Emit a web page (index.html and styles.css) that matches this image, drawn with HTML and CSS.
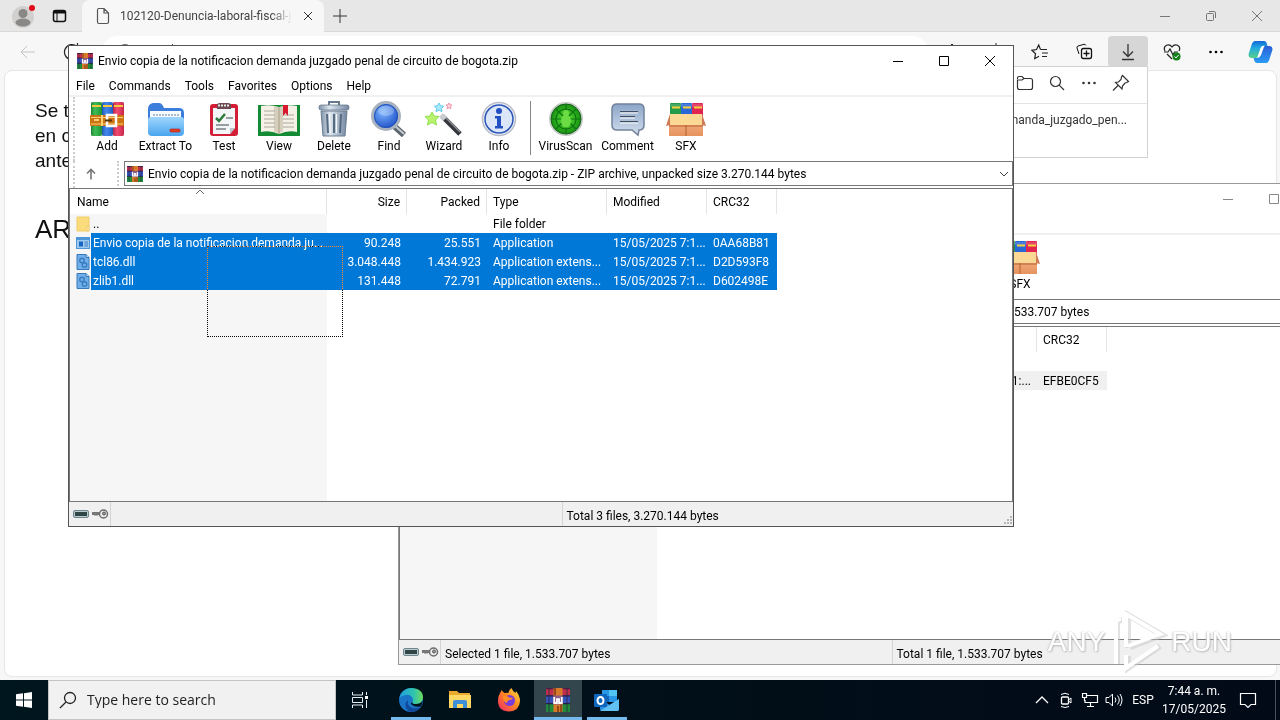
FILE: index.html
```
<!DOCTYPE html>
<html lang="en">
<head>
    <meta charset="UTF-8">
    <meta name="viewport" content="width=device-width, initial-scale=1.0">
    <title>Envio copia de la notificacion demanda juzgado penal de circuito de bogota.zip</title>
    <link rel="stylesheet" href="styles.css">
</head>
<body>
    <!-- shared icons -->
    <svg class="defs" width="0" height="0" aria-hidden="true">
        <defs>
            <linearGradient id="gBlue" x1="0" y1="0" x2="0" y2="1"><stop offset="0" stop-color="#9fd6ff"/><stop offset="1" stop-color="#4aa4ee"/></linearGradient>
            <linearGradient id="gSteel" x1="0" y1="0" x2="1" y2="0"><stop offset="0" stop-color="#7f93aa"/><stop offset=".35" stop-color="#dde7ef"/><stop offset="1" stop-color="#7285a0"/></linearGradient>
            <linearGradient id="gBook" x1="0" y1="0" x2="1" y2="0"><stop offset="0" stop-color="#0008"/><stop offset=".4" stop-color="#fff4"/><stop offset="1" stop-color="#0005"/></linearGradient>
            <linearGradient id="gBox" x1="0" y1="0" x2="0" y2="1"><stop offset="0" stop-color="#f4b183"/><stop offset="1" stop-color="#e6935f"/></linearGradient>
            <linearGradient id="gBubble" x1="0" y1="0" x2="0" y2="1"><stop offset="0" stop-color="#8ba6ca"/><stop offset="1" stop-color="#d3deed"/></linearGradient>
            <radialGradient id="gLens" cx=".4" cy=".35" r=".7"><stop offset="0" stop-color="#7fb6ff"/><stop offset="1" stop-color="#1548c4"/></radialGradient>
            <radialGradient id="gVirus"><stop offset="0" stop-color="#5fe838"/><stop offset="1" stop-color="#128a0e"/></radialGradient>
            <linearGradient id="gEdge" x1="0" y1="0" x2="1" y2="0"><stop offset="0" stop-color="#1f9fdc"/><stop offset=".6" stop-color="#2fc3b0"/><stop offset="1" stop-color="#6fdc5c"/></linearGradient>
            <linearGradient id="gFox" x1="1" y1="0" x2="0" y2="1"><stop offset="0" stop-color="#ffe34a"/><stop offset=".45" stop-color="#ff8a1e"/><stop offset="1" stop-color="#f0246c"/></linearGradient>
            <linearGradient id="gPilot" x1="0" y1="0" x2="0" y2="1"><stop offset="0" stop-color="#1268d8"/><stop offset=".4" stop-color="#20a9e0"/><stop offset="1" stop-color="#58cf8c"/></linearGradient>
            <linearGradient id="gPilot2" x1="0" y1="0" x2="0" y2="1"><stop offset="0" stop-color="#2b5fd8"/><stop offset="1" stop-color="#2a9cf4"/></linearGradient>
        </defs>
        <symbol id="winrar" viewBox="0 0 16 16">
            <rect width="16" height="5" fill="#c0304a"/><rect y="5" width="16" height="5" fill="#3553b8"/><rect y="10" width="16" height="6" fill="#1f8a3c"/>
            <path d="M0 5.200h16M0 10.400h16M0 .500h16" stroke="#2b1f45" stroke-width=".8"/>
            <path d="M2 0v16M14 0v16" stroke="#2a2040" stroke-opacity=".5"/>
            <rect x="5" width="6" height="16" fill="#d77a2c"/><path d="M6 0v5M10 11v5M8 12v4" stroke="#7d3a12"/>
            <path d="M5 5h6v6H5z" fill="#8e5a86"/><path d="M5.500 6v4h1.800V7.500h1.400V10h1.800V6" fill="none" stroke="#fff" stroke-width="1.200"/>
        </symbol>
        <symbol id="sfx" viewBox="0 0 42 36">
            <rect x="5" y="2" width="11" height="15" rx="1" fill="#249b48"/><rect x="16" y="2" width="11" height="15" rx="1" fill="#2967d8"/><rect x="27" y="2" width="11" height="15" rx="1" fill="#e02550"/>
            <path d="M5 3h11v3H5zM16 3h11v3H16zM27 3h11v3H27z" fill="#fff" opacity=".15"/><path d="M7 6.500h8M18 6.500h8M29 6.500h8" stroke="#f5d13c" stroke-width="2"/>
            <path d="M4 18h34v17H4z" fill="url(#gBox)"/><path d="M5 13h32l3 11H2z" fill="#fbd893"/><path d="M5 13 1 25l4-1zM37 13l4 12-4-1z" fill="#cf7a55"/>
            <path d="M4 24h34v2H4z" fill="#b85e32" opacity=".5"/><path d="M21 24v11" stroke="#b4602f"/>
        </symbol>
        <symbol id="disk" viewBox="0 0 16 8">
            <rect x=".5" y=".5" width="15" height="7" rx="1.500" fill="#b7cbd0" stroke="#71868b"/><rect x="2" y="2" width="12" height="4" fill="#304546"/>
        </symbol>
        <symbol id="key" viewBox="0 0 17 10">
            <path d="M0 3h9v3H6L5 7 4 6 3 7 2 6H0z" fill="#777"/><circle cx="11.500" cy="5" r="4" fill="#eee" stroke="#6b6b6b" stroke-width="1.500"/><circle cx="12" cy="4.500" r="1.500" fill="#999" stroke="#555"/>
        </symbol>
        <symbol id="dll" viewBox="0 0 13 16">
            <path d="M.5.5h9l3 3v12H.5z" fill="#6fb0ea" stroke="#3b78b8"/><path d="M9.500.5v3h3" fill="#b9dcf8" stroke="#3b78b8"/>
            <circle cx="5.500" cy="6.500" r="2.300" fill="none" stroke="#3b7cc0" stroke-width="1.400"/><circle cx="8" cy="11" r="2.300" fill="none" stroke="#3b7cc0" stroke-width="1.400"/>
        </symbol>
        <symbol id="search" viewBox="0 0 16 16"><circle cx="6.500" cy="6.500" r="5" fill="none" stroke="currentColor" stroke-width="1.200"/><path d="m10.200 10.200 4.800 4.800" stroke="currentColor" stroke-width="1.200"/></symbol>
        <symbol id="dots" viewBox="0 0 16 16"><g fill="currentColor"><circle cx="2.500" cy="8" r="1.300"/><circle cx="8" cy="8" r="1.300"/><circle cx="13.500" cy="8" r="1.300"/></g></symbol>
        <symbol id="min" viewBox="0 0 12 12"><path d="M1 6.500h10" stroke="currentColor"/></symbol>
        <symbol id="max" viewBox="0 0 12 12"><path d="M1.500 1.500h9v9h-9z" fill="none" stroke="currentColor"/></symbol>
        <symbol id="close" viewBox="0 0 12 12"><path d="m1 1 10 10M11 1 1 11" stroke="currentColor"/></symbol>
    </svg>

    <div class="desktop">
        <div class="browser">
            <div class="tab-strip">
                <button class="profile" aria-label="Profile">
                    <svg width="24" height="24" viewBox="0 0 24 24"><circle cx="11" cy="13" r="11" fill="#d2d0ce"/><circle cx="11" cy="9.500" r="4.500" fill="#8a8886"/><ellipse cx="11" cy="18.500" rx="7.500" ry="4" fill="#8a8886"/><circle cx="20" cy="4" r="3" fill="#e00b1c"/></svg>
                </button>
                <button class="tab-actions" aria-label="Tab actions">
                    <svg width="16" height="16" viewBox="0 0 16 16"><rect x="1.500" y="2.500" width="12" height="11" rx="2" fill="none" stroke="#111" stroke-width="1.500"/><path d="M1.500 4h12" stroke="#111" stroke-width="3"/><path d="M5 4v9.500" stroke="#111"/></svg>
                </button>
                <div class="tab">
                    <svg width="14" height="18" viewBox="0 0 14 18"><path d="M1.500 3v12q0 1.500 1.500 1.500h8q1.500 0 1.500-1.500V6L8 1.500H3Q1.500 1.500 1.500 3zM8 1.500V6h4.500" fill="none" stroke="#555" stroke-width="1.200"/></svg>
                    <span class="tab-title">102120-Denuncia-laboral-fiscal-j</span>
                    <button aria-label="Close tab"><svg width="12" height="12" viewBox="0 0 12 12"><path d="m2 2 8 8M10 2l-8 8" stroke="#333"/></svg></button>
                </div>
                <button class="new-tab" aria-label="New tab"><svg width="14" height="14" viewBox="0 0 14 14"><path d="M7 0v14M0 7h14" stroke="#333"/></svg></button>
                <div class="controls">
                    <button aria-label="Minimize"><svg width="12" height="12"><use href="#min"/></svg></button>
                    <button aria-label="Restore"><svg width="12" height="12" viewBox="0 0 12 12"><rect x="1.500" y="3.500" width="7" height="7" rx="1" fill="none" stroke="currentColor"/><path d="M4 1.500h5q1.500 0 1.500 1.500v5" fill="none" stroke="currentColor"/></svg></button>
                    <button aria-label="Close"><svg width="12" height="12"><use href="#close"/></svg></button>
                </div>
            </div>
            <div class="browser-bar">
                <button aria-label="Back"><svg width="16" height="16" viewBox="0 0 16 16"><path d="M15 8H1M7 2 1 8l6 6" fill="none" stroke="#c4c4c4"/></svg></button>
                <button aria-label="Refresh"><svg width="18" height="18" viewBox="0 0 18 18"><path d="M14 3.500A7.500 7.500 0 1 0 16.500 9M14.500 0v4h-4" fill="none" stroke="#222" stroke-width="1.200"/></svg></button>
                <div class="address-pill">
                    <svg width="18" height="18" viewBox="0 0 18 18"><circle cx="9" cy="9" r="7.500" fill="none" stroke="#666"/></svg>
                    <span class="pill-line"></span>
                </div>
                <button class="tool"><svg width="18" height="18" viewBox="0 0 18 18"><path d="M2 8 9 1l7 7v9H2z" fill="none" stroke="#222"/></svg></button>
                <button class="tool"><svg width="18" height="18" viewBox="0 0 18 18"><path d="M9 0v17M3 3h12v13H3z" fill="none" stroke="#222"/></svg></button>
                <button class="tool" aria-label="Favorites"><svg width="18" height="18" viewBox="0 0 18 18"><path d="M9.500 6.500 7.700 2 5.500 6.500 1 7.300l3.500 3.400-.8 5 4.300-2.400M9.500 6.500H16M11 10h6M11 13.500h5" fill="none" stroke="#222" stroke-width="1.200"/></svg></button>
                <button class="tool" aria-label="Collections"><svg width="18" height="18" viewBox="0 0 18 18"><rect x="6.500" y="5.500" width="10" height="10" rx="2" fill="none" stroke="#111" stroke-width="1.300"/><path d="M11.500 7.500v6M8.500 10.500h6" stroke="#111" stroke-width="1.300"/><path d="m4 11-2-6q-.4-1.500 1-2l6-1.700q1.300-.3 1.900 1.200" fill="none" stroke="#111"/></svg></button>
                <button class="tool active" aria-label="Downloads"><svg width="18" height="18" viewBox="0 0 18 18"><path d="M9 1v12M4 8.500 9 13.500l5-5M3 16.500h12" fill="none" stroke="#333" stroke-width="1.300"/></svg></button>
                <button class="tool" aria-label="Browser essentials"><svg width="18" height="18" viewBox="0 0 18 18"><path d="M2 8Q0 4 3.500 2.200 7 1 9 4q2-3 5.500-1.800Q18 4 16 8M1 9h4l2-3 3 6 1.500-3H15M4 11l5 5" fill="none" stroke="#222" stroke-width="1.200"/><circle cx="13.500" cy="13.500" r="4" fill="#13801a"/><path d="m11.500 13.500 1.500 1.500 2.500-3" fill="none" stroke="#fff"/></svg></button>
                <button class="tool" aria-label="Settings and more"><svg width="16" height="16"><use href="#dots"/></svg></button>
                <button class="tool" aria-label="Copilot"><svg width="25" height="24" viewBox="0 0 25 24"><path d="M7 1h9q2 0 2.600 2l1 3h-4q-2 0-2.600 2l-2.500 8q-.6 2-2.500 2H4q-4 0-3.400-4L4 3.500Q5 1 7 1z" fill="url(#gPilot)"/><path d="M18 23H9q-2 0-2.500-2l-1-3h4q2 0 2.600-2l2.500-8q.6-2 2.500-2H21q4 0 3.400 4L21 20.500q-1 2.500-3 2.500z" fill="url(#gPilot2)"/><path d="m9.500 17 3-9q.8-2.500 4-2.500l-3.500 9.500q-.6 2-3.500 2z" fill="#fff"/></svg></button>
            </div>
            <main class="page">
                <p>Se t<br>en c<br>ante</p>
                <h1>AR</h1>
            </main>
        </div>

        <!-- downloads flyout -->
        <div class="flyout">
            <div class="flyout-head">
                <button aria-label="Open folder"><svg width="18" height="16" viewBox="0 0 18 16"><path d="M1.500 4V3q0-1.500 1.500-1.500h3l2 2h6.500q2 0 2 2v7q0 2-2 2h-11q-2 0-2-2V5H6l2-1.500" fill="none" stroke="currentColor" stroke-width="1.200"/></svg></button>
                <button aria-label="Search downloads"><svg width="16" height="16"><use href="#search"/></svg></button>
                <button aria-label="More options"><svg width="16" height="16"><use href="#dots"/></svg></button>
                <button aria-label="Pin"><svg width="18" height="18" viewBox="0 0 18 18"><path d="m10.500 1.500 6 6-1.500 1-2 .5-2.500 3-.5 3-6.500-6.500 3-.5 2.500-2.500.5-2.500zM6 11.500l-5 5" fill="none" stroke="currentColor" stroke-width="1.200"/></svg></button>
            </div>
            <p>demanda_juzgado_pen...</p>
        </div>

        <section class="window window-back">
            <div class="titlebar">
                <span class="title"></span>
                <div class="controls">
                    <button aria-label="Minimize"><svg width="12" height="12"><use href="#min"/></svg></button>
                    <button aria-label="Maximize"><svg width="12" height="12"><use href="#max"/></svg></button>
                    <button aria-label="Close"><svg width="12" height="12"><use href="#close"/></svg></button>
                </div>
            </div>
            <div class="menu"></div>
            <div class="toolbar">
                <button><svg width="42" height="36"><use href="#sfx"/></svg>SFX</button>
            </div>
            <div class="location">
                <div class="combo"><span>1.533.707 bytes</span></div>
            </div>
            <div class="list">
                <table>
                    <colgroup><col class="c-name"><col class="c-num"><col class="c-num"><col class="c-type"><col class="c-date"><col class="c-crc"></colgroup>
                    <thead>
                        <tr><th></th><th></th><th></th><th></th><th></th><th>CRC32</th></tr>
                    </thead>
                    <tbody>
                        <tr><td></td><td></td><td></td><td></td><td></td><td></td></tr>
                        <tr class="marked"><td></td><td></td><td></td><td></td><td class="num">1:...</td><td>EFBE0CF5</td></tr>
                    </tbody>
                </table>
            </div>
            <div class="statusbar">
                <span class="status-icons"><svg width="16" height="8"><use href="#disk"/></svg><svg width="17" height="10"><use href="#key"/></svg></span>
                <span class="status-text">Selected 1 file, 1.533.707 bytes</span>
                <span class="status-text">Total 1 file, 1.533.707 bytes</span>
            </div>
        </section>

        <section class="window window-front">
            <div class="titlebar">
                <svg width="16" height="16"><use href="#winrar"/></svg>
                <span class="title">Envio copia de la notificacion demanda juzgado penal de circuito de bogota.zip</span>
                <div class="controls">
                    <button aria-label="Minimize"><svg width="12" height="12"><use href="#min"/></svg></button>
                    <button aria-label="Maximize"><svg width="12" height="12"><use href="#max"/></svg></button>
                    <button aria-label="Close"><svg width="12" height="12"><use href="#close"/></svg></button>
                </div>
            </div>
            <nav class="menu">
                <button>File</button>
                <button>Commands</button>
                <button>Tools</button>
                <button>Favorites</button>
                <button>Options</button>
                <button>Help</button>
            </nav>
            <div class="toolbar">
                <button>
                    <svg width="36" height="36" viewBox="0 0 36 36"><rect x="2" y="1" width="11" height="34" rx="2" fill="#1fae3c"/><rect x="13" y="1" width="11" height="34" rx="2" fill="#2471e8"/><rect x="24" y="1" width="11" height="34" rx="2" fill="#ee2c58"/><rect x="2" y="1" width="11" height="34" fill="url(#gBook)" opacity=".5"/><rect x="13" y="1" width="11" height="34" fill="url(#gBook)" opacity=".5"/><rect x="24" y="1" width="11" height="34" fill="url(#gBook)" opacity=".5"/><path d="M3 5h9M14 5h9M25 5h9" stroke="#f6c93a" stroke-width="2"/><rect x="1" y="14" width="34" height="11" rx="1" fill="#cc7414"/><path d="M2 16.500h32M2 23h32" stroke="#ffd074"/><path d="M13 14v11M5 19h5" stroke="#ffd074" stroke-width="2"/><rect x="18" y="14" width="9" height="11" fill="none" stroke="#fff" stroke-width="2.500"/><path d="M16 19.500h7" stroke="#5b340c" stroke-width="2"/></svg>
                    Add
                </button>
                <button class="wide">
                    <svg width="38" height="36" viewBox="0 0 38 36"><path d="M1 8q0-5 5-6h6q3 0 5 5h15q5 0 5 5v18H1z" fill="#3c7edc"/><path d="M3 10h31v12H3z" fill="#f7fbff"/><path d="M6 14h26" stroke="#a9bed2" stroke-width="2" stroke-dasharray="2 1"/><path d="M1 19q0-3 3-3h30q3 0 3 3v12q0 4-4 4H5q-4 0-4-4z" fill="url(#gBlue)"/><rect x="23" y="28" width="10" height="3" rx="1" fill="#e23c24" stroke="#a91f12" stroke-width=".6"/></svg>
                    Extract To
                </button>
                <button>
                    <svg width="30" height="36" viewBox="0 0 30 36"><rect x="1" y="3" width="28" height="32" rx="3" fill="#d21e36"/><path d="M4 7h22v20l-5 6H4z" fill="#f4f5f6"/><path d="M21 33v-6h5z" fill="#bcc2c8"/><path d="M8 8V4q0-2 3-2h8q3 0 3 2v4z" fill="#6a4a50"/><path d="M9 4.500h12" stroke="#e6e6e8" stroke-width="2" stroke-dasharray="2 1"/><path d="m7 17 3 3 6-7" fill="none" stroke="#2c7a3c" stroke-width="2.500"/><path d="M17 17h7M7 24h13M7 28h10" stroke="#7a8087" stroke-width="1.300"/></svg>
                    Test
                </button>
                <button>
                    <svg width="44" height="36" viewBox="0 0 44 36"><path d="M1 4h42v31H1z" fill="#138a34"/><path d="M4 5q9-2 18 1 9-3 18-1v26q-9-2-18 2-9-4-18-2z" fill="#f5f1e6"/><path d="M22 6v27" stroke="#9b917b"/><path d="M17 5.500q3 0 5 1v26q-2-1-5-2zM22 6.500q2-1 4-1v25q-2 0-4 2z" fill="#b7ad96" opacity=".5"/><path d="M7 10h11M7 14h11M7 18h11M7 22h11M7 26h11M26 14h11M26 18h11M26 22h11M26 26h11" stroke="#a9a79f"/><path d="M26 4h5v11l-2.500-3-2.500 3z" fill="#d8182e"/></svg>
                    View
                </button>
                <button>
                    <svg width="34" height="36" viewBox="0 0 34 36"><path d="M12 4V1h10v3" fill="none" stroke="#66788c" stroke-width="2"/><rect x="2" y="4" width="30" height="5" rx="2" fill="url(#gSteel)" stroke="#5c6e82" stroke-width=".7"/><path d="M4 10h26l-2 25H6z" fill="url(#gSteel)" stroke="#6c7e92"/><path d="m10 13 1 19M17 13v19M24 13l-1 19" stroke="#566a80" stroke-width="2"/><path d="m12.500 13 .7 19M19.500 13v19" stroke="#f5f9fc"/></svg>
                    Delete
                </button>
                <button>
                    <svg width="38" height="36" viewBox="0 0 38 36"><path d="m24 25 10 9" stroke="#5c646e" stroke-width="6"/><path d="m24 24 10 9" stroke="#c3cad2" stroke-width="2"/><circle cx="16" cy="15" r="13.500" fill="url(#gLens)" stroke="#a9b3be" stroke-width="3"/><circle cx="16" cy="15" r="11.500" fill="none" stroke="#2451b4"/><ellipse cx="16" cy="10" rx="8" ry="5" fill="#fff" opacity=".25"/></svg>
                    Find
                </button>
                <button>
                    <svg width="38" height="36" viewBox="0 0 38 36"><path d="m17 15 18 18" stroke="#33363b" stroke-width="5"/><path d="m18 14 17 17" stroke="#8a8e94" stroke-width="1.500"/><path d="m16 14 4 4" stroke="#c9cdd2" stroke-width="5"/><path d="m7 11 2 4 5 .5-3.500 3.500 1 5L7 21.500 2.500 24l1-5L0 15.500l5-.5z" fill="#b9f26e" stroke="#8be04a"/><path d="m14 2 1.500 2.800 3.200.4-2.300 2.300.6 3.200-3-1.600-3 1.600.6-3.200-2.300-2.300 3.200-.4z" fill="#a9e9ff" stroke="#62cbee"/><path d="m24 2 1 1.800 2 .3-1.500 1.500.4 2L24 6.700l-1.900.9.4-2L21 4.100l2-.3z" fill="#ffd9e2" stroke="#ee7b94" stroke-width=".8"/></svg>
                    Wizard
                </button>
                <button>
                    <svg width="36" height="36" viewBox="0 0 36 36"><circle cx="18" cy="18" r="16.500" fill="#eef1f6" stroke="#b9bec9" stroke-width="1.500"/><circle cx="18" cy="18" r="14" fill="#dbe6f8" stroke="#2b55b8" stroke-width="1.500"/><circle cx="18" cy="10" r="3" fill="#234fc4"/><path d="M14 15h6v10h2v2.500h-8V25h2v-7.500h-2z" fill="#234fc4"/></svg>
                    Info
                </button>
                <span class="separator"></span>
                <button class="wide">
                    <svg width="36" height="36" viewBox="0 0 36 36"><circle cx="18" cy="18" r="16" fill="url(#gVirus)" stroke="#c5cbc5" stroke-width="2"/><circle cx="18" cy="18" r="15" fill="none" stroke="#14601a"/><g fill="none" stroke="#0c7410" stroke-width="1.200"><circle cx="18" cy="18" r="10"/><path d="M18 4v28M4 18h28M8 8l20 20M28 8 8 28"/></g><ellipse cx="18" cy="20" rx="5" ry="6.500" fill="#6bdc44"/><circle cx="18" cy="12" r="3" fill="#6bdc44"/></svg>
                    VirusScan
                </button>
                <button class="wide">
                    <svg width="34" height="36" viewBox="0 0 34 36"><path d="M6 3h22q5 0 5 5v16q0 5-5 5l-1 5-6-5H6q-5 0-5-5V8q0-5 5-5z" fill="url(#gBubble)" stroke="#73829b" stroke-width="1.500"/><path d="M9 11h18M9 16h15M9 21h18" stroke="#fff" stroke-width="3"/><path d="M9 10.500h18M9 15.500h15M9 20.500h18" stroke="#3b506e" stroke-width="1.500"/></svg>
                    Comment
                </button>
                <button><svg width="42" height="36"><use href="#sfx"/></svg>SFX</button>
            </div>
            <div class="location">
                <button class="up" aria-label="Up one level"><svg width="12" height="12" viewBox="0 0 12 12"><path d="M6 11.500V2M2 5.500l4-4 4 4" fill="none" stroke="#777" stroke-width="1.600"/></svg></button>
                <div class="combo">
                    <svg width="16" height="16"><use href="#winrar"/></svg>
                    <select aria-label="Archive path">
                        <option>Envio copia de la notificacion demanda juzgado penal de circuito de bogota.zip - ZIP archive, unpacked size 3.270.144 bytes</option>
                    </select>
                    <svg width="10" height="10" viewBox="0 0 10 10"><path d="m1 3 4 4 4-4" fill="none" stroke="#444"/></svg>
                </div>
            </div>
            <div class="list">
                <table>
                    <colgroup><col class="c-name"><col class="c-num"><col class="c-num"><col class="c-type"><col class="c-date"><col class="c-crc"></colgroup>
                    <thead>
                        <tr>
                            <th class="sorted">Name<svg class="sort-mark" width="10" height="6" viewBox="0 0 10 6"><path d="m1 5 4-4 4 4" fill="none" stroke="#666"/></svg></th>
                            <th class="num">Size</th><th class="num">Packed</th><th>Type</th><th>Modified</th><th>CRC32</th>
                        </tr>
                    </thead>
                    <tbody>
                        <tr>
                            <td class="file"><svg width="14" height="16" viewBox="0 0 14 16"><path d="M1 1h12v14H1z" fill="#fbdc7c" stroke="#f0cd68"/><path d="M11 10h2v5h-2z" fill="#fff0b8" stroke="#e2b94a" stroke-width=".6"/></svg><span>..</span></td>
                            <td></td><td></td><td>File folder</td><td></td><td></td>
                        </tr>
                        <tr class="selected">
                            <td class="file"><svg width="14" height="12" viewBox="0 0 14 12"><rect width="14" height="12" fill="#4e97d8"/><path d="M1 3h12v8H1z" fill="#9fcaf0"/><path d="M3 4.500h4v5H3z" fill="#1567c4"/><path d="M8.500 5H12M8.500 7H12M8.500 9H12" stroke="#3d7fc0"/></svg><span>Envio copia de la notificacion demanda ju...</span></td>
                            <td class="num">90.248</td><td class="num">25.551</td><td>Application</td><td>15/05/2025 7:1...</td><td>0AA68B81</td>
                        </tr>
                        <tr class="selected">
                            <td class="file"><svg width="14" height="16"><use href="#dll"/></svg><span>tcl86.dll</span></td>
                            <td class="num">3.048.448</td><td class="num">1.434.923</td><td>Application extens...</td><td>15/05/2025 7:1...</td><td>D2D593F8</td>
                        </tr>
                        <tr class="selected">
                            <td class="file"><svg width="14" height="16"><use href="#dll"/></svg><span>zlib1.dll</span></td>
                            <td class="num">131.448</td><td class="num">72.791</td><td>Application extens...</td><td>15/05/2025 7:1...</td><td>D602498E</td>
                        </tr>
                    </tbody>
                </table>
                <div class="marquee"></div>
            </div>
            <div class="statusbar">
                <span class="status-icons"><svg width="16" height="8"><use href="#disk"/></svg><svg width="17" height="10"><use href="#key"/></svg></span>
                <span class="status-text"></span>
                <span class="status-text">Total 3 files, 3.270.144 bytes</span>
                <svg class="grip" width="10" height="10" viewBox="0 0 10 10"><path d="M8 1h2v2H8zM8 4h2v2H8zM8 7h2v2H8zM5 4h2v2H5zM5 7h2v2H5zM2 7h2v2H2z" fill="#b5b5b5"/></svg>
            </div>
        </section>

        <div class="watermark">
            <span>ANY</span>
            <svg width="60" height="64" viewBox="0 0 60 64"><g fill="none" stroke="#c6c6c6" stroke-width="6" opacity=".5"><path d="M9 54V14q0-4 5-4M20 38V5l34 20-32 12M20 46v12l32-22"/></g><g fill="none" stroke="#fff" stroke-width="4"><path d="M8 54V13q0-4 5-4M18 37V4l34 20-32 12M18 45v13l32-22"/></g></svg>
            <span>RUN</span>
        </div>

        <footer class="taskbar">
            <button class="start" aria-label="Start"><svg width="16" height="16" viewBox="0 0 16 16"><path d="M0 2.300 7 1.300v6.200H0zM8 1.200 16 0v7.500H8zM0 8.500h7v6.200l-7-1zM8 8.500h8V16l-8-1.200z" fill="#fff"/></svg></button>
            <label class="search">
                <svg width="18" height="18" viewBox="0 0 18 18"><circle cx="11" cy="7" r="5.500" fill="none" stroke="#222" stroke-width="1.300"/><path d="m7 11-6 6" stroke="#222" stroke-width="1.300"/></svg>
                <input type="text" placeholder="Type here to search" aria-label="Search">
            </label>
            <button class="app task-view" aria-label="Task View"><svg width="18" height="16" viewBox="0 0 18 16"><path d="M1.500 0v3h10V0M1.500 16v-3h10v3M1.500 5.500h10v5h-10zM15.500 0v3M15.500 8v8" fill="none" stroke="#e8eef0"/><path d="M14 4h3v3h-3z" fill="#fff"/></svg></button>
            <button class="app open" aria-label="Edge"><svg width="24" height="24" viewBox="0 0 24 24"><circle cx="12" cy="12" r="12" fill="#1a74c8"/><path d="M.3 10A12 12 0 0 1 12 0q12 .5 12 9.500-.5 6.500-7 6.500-4 0-3.500-1.500 1.500-2 0-4.500Q11 6 6.500 7 2 8 .3 10z" fill="url(#gEdge)"/><path d="M9 12q-1.500 6 4.500 8 4 1 8.500-1-4 5-10 5-6-2-5.500-8 .500-2.500 2.500-4z" fill="#11499a"/><path d="M13.500 14.500q-.5 1.500 3.500 1.500 5 0 6.500-3.500-.2 3.500-2 6-6 1-9-2-1.500-2 1-2z" fill="#01141c"/></svg></button>
            <button class="app" aria-label="File Explorer"><svg width="22" height="20" viewBox="0 0 22 20"><path d="M0 1h8l2 2h11v15H0z" fill="#e9a92c"/><path d="M0 5h22v13H0z" fill="#fbd766"/><path d="M4 18v-6q0-2 2-2h10q2 0 2 2v6h-4v-4H8v4z" fill="#3d8fd8"/></svg></button>
            <button class="app" aria-label="Firefox"><svg width="24" height="24" viewBox="0 0 24 24"><path d="M3 5q1-1 1.500-3 1.500 2 3 3 2-.5 4 0 0-3 3-5 1 3 4 5l.5-2Q23 8 23 13q-.5 10-11 10.500Q1 23 1 13q0-5 2-8z" fill="url(#gFox)"/><circle cx="12.500" cy="12.500" r="5.500" fill="#7a3ddc"/><path d="M6 8q4-1 6 1.500l4 .5q-1 2-4 2-2 1-2 3-4-1-4-7z" fill="#ff8c22"/></svg></button>
            <button class="app open current" aria-label="WinRAR"><svg width="24" height="24"><use href="#winrar"/></svg></button>
            <button class="app open" aria-label="Outlook"><svg width="26" height="24" viewBox="0 0 26 24"><path d="M8 2h15v12H8z" fill="#2a96e6"/><path d="M15 2h8v6h-8z" fill="#50c4f5"/><path d="M8 8h7v6H8z" fill="#1265b8"/><path d="M6 11l10 6 9-6v10q0 2-2 2H8q-2 0-2-2z" fill="#2b8ee0"/><path d="m25 11-19 12h17q2 0 2-2z" fill="#62c1f3"/><rect y="6" width="13" height="13" rx="1" fill="#0f66bd"/><ellipse cx="6.500" cy="12.500" rx="3" ry="3.500" fill="none" stroke="#fff" stroke-width="2"/></svg></button>
            <div class="tray">
                <button aria-label="Show hidden icons"><svg width="14" height="14" viewBox="0 0 14 14"><path d="m1 10 6-6 6 6" fill="none" stroke="currentColor" stroke-width="1.300"/></svg></button>
                <button aria-label="Meet Now"><svg width="14" height="16" viewBox="0 0 14 16"><rect x="2.500" y="5" width="7" height="7" rx="1" fill="none" stroke="currentColor" stroke-width="1.300"/><path d="M9.500 8 12 6v5L9.500 9M2 2.500q4-2.500 8 0M2 14.500q4 2 8 0" fill="none" stroke="currentColor"/></svg></button>
                <button aria-label="Network"><svg width="18" height="16" viewBox="0 0 18 16"><path d="M5 3.500h11.500v7H4V8M9.500 10.500v4M6 14.500h7M1.500 1.500h4v4h-4zM3.500 5.500V9" fill="none" stroke="currentColor" stroke-width="1.200"/></svg></button>
                <button aria-label="Volume"><svg width="18" height="16" viewBox="0 0 18 16"><path d="M1 5.500h3L7.500 2v12L4 10.500H1zM10 5.500q2 2.500 0 5M12.500 3.500q3.500 4.500 0 9M15 2q4 6 0 12" fill="none" stroke="currentColor"/></svg></button>
                <button class="lang">ESP</button>
                <button class="clock"><span>7:44 a. m.</span><span>17/05/2025</span></button>
                <button class="notify" aria-label="Notifications"><svg width="18" height="18" viewBox="0 0 18 18"><path d="M1.500 2.500h15v11H12l-3 3-3-3H1.500z" fill="none" stroke="currentColor" stroke-width="1.200"/></svg></button>
            </div>
        </footer>
    </div>
</body>
</html>
```
FILE: styles.css
```
* {
    box-sizing: border-box;
}
body {
    margin: 0;
    font-family: Roboto, "Open Sans", sans-serif;
    font-size: 12px;
    line-height: 16px;
    color: #000;
}
button, select, input {
    font: inherit;
    color: inherit;
    border: none;
    background: none;
    padding: 0;
    margin: 0;
}
button {
    display: flex;
    align-items: center;
    justify-content: center;
}
svg {
    flex: none;
}
.defs {
    position: absolute;
}
.desktop {
    position: relative;
    height: 100vh;
    display: flex;
    flex-direction: column;
    overflow: hidden;
}

/* browser */
.browser {
    flex: 1;
    display: flex;
    flex-direction: column;
    background: #f7f7f7;
}
.tab-strip {
    display: flex;
    height: 32px;
    background: #e7e7e7;
    border-bottom: 1px solid #d8d8d8;
}
.profile {
    width: 44px;
    padding-left: 4px;
}
.tab-actions {
    width: 32px;
}
.tab {
    display: flex;
    align-items: center;
    gap: 10px;
    width: 242px;
    height: 32px;
    margin-left: 6px;
    padding: 0 10px 0 14px;
    background: #f7f7f7;
    border-radius: 8px 8px 0 0;
    color: #444;
}
.tab-title {
    flex: 1;
    white-space: nowrap;
    -webkit-mask-image: linear-gradient(to right, #000 88%, transparent);
    mask-image: linear-gradient(to right, #000 88%, transparent);
}
.new-tab {
    width: 32px;
}
.controls {
    display: flex;
    margin-left: auto;
}
.controls button {
    width: 46px;
}
.tab-strip .controls {
    color: #777;
}
.browser-bar {
    display: flex;
    height: 38px;
    padding: 4px 0 3px 20px;
    gap: 4px;
}
.browser-bar button {
    width: 40px;
}
.browser-bar button:first-child {
    width: 16px;
    margin-right: 12px;
}
.address-pill {
    flex: 1;
    display: flex;
    align-items: center;
    gap: 38px;
    margin-left: 6px;
    padding: 0 14px;
    background: #fff;
    border-radius: 16px;
}
.pill-line {
    width: 1px;
    height: 16px;
    background: #555;
}
.tool.active {
    background: #d6d6d6;
    border-radius: 4px;
}
.page {
    flex: 1;
    margin: 0 3px 3px 4px;
    padding: 27px 30px;
    background: #fff;
    border: 1px solid #e6e6e6;
    border-radius: 8px;
    font-family: "Liberation Sans", Arial, sans-serif;
    color: #111;
}
.page p {
    margin: 0;
    font-size: 19px;
    line-height: 25px;
}
.page h1 {
    margin: 40px 0 0;
    font-size: 26px;
    font-weight: normal;
    line-height: 32px;
}
.flyout {
    position: absolute;
    top: 66px;
    right: 132px;
    width: 360px;
    height: 92px;
    background: #fff;
    border: 1px solid #d2d2d2;
    color: #333;
}
.flyout-head {
    display: flex;
    justify-content: flex-end;
    height: 37px;
    padding-right: 10px;
    border-bottom: 1px solid #e3e3e3;
}
.flyout-head button {
    width: 32px;
    height: 32px;
}
.flyout p {
    margin: 8px 20px;
    text-align: right;
}

/* archive windows */
.window {
    position: absolute;
    display: flex;
    flex-direction: column;
    background: #fff;
    border: 1px solid #555;
}
.window-back {
    top: 183px;
    right: -64px;
    bottom: 55px;
    left: 398px;
    border-color: #999;
}
.window-front {
    top: 45px;
    right: 266px;
    bottom: 193px;
    left: 68px;
}
.titlebar {
    display: flex;
    align-items: center;
    gap: 5px;
    height: 30px;
    padding-left: 8px;
}
.titlebar .controls {
    align-self: stretch;
}
.window-back .controls {
    color: #888;
}
.menu {
    display: flex;
    gap: 14px;
    height: 21px;
    padding: 0 7px;
    border-bottom: 2px solid #f0f0f0;
}
.toolbar {
    display: flex;
    gap: 1px;
    height: 64px;
    margin-left: 4px;
    padding: 4px 0 0 5px;
    border-left: 2px dotted #ccc;
}
.toolbar button {
    flex-direction: column;
    justify-content: flex-start;
    gap: 1px;
    min-width: 54px;
    height: 56px;
}
.toolbar .wide {
    min-width: 61px;
}
.window-back .toolbar {
    padding-left: 588px;
}
.separator {
    width: 1px;
    height: 54px;
    margin: 0 3px;
    background: #888;
}
.location {
    display: flex;
    height: 27px;
    margin-left: 4px;
    padding-bottom: 2px;
    border-left: 2px dotted #ccc;
}
.up {
    width: 44px;
    padding-right: 10px;
    border-right: 2px dotted #ccc;
    margin-right: 5px;
}
.combo {
    flex: 1;
    display: flex;
    align-items: center;
    gap: 5px;
    height: 25px;
    padding: 0 3px 0 2px;
    border: 1px solid #777;
}
.combo select {
    flex: 1;
    min-width: 0;
    appearance: none;
}
.window-back .combo {
    padding-left: 598px;
}
.list {
    position: relative;
    flex: 1;
    border: 1px solid #777;
    background: linear-gradient(#f6f6f6, #f6f6f6) 0 25px / 257px 100% no-repeat;
}
table {
    width: 707px;
    table-layout: fixed;
    border-collapse: separate;
    border-spacing: 0;
}
.c-name { width: 257px; }
.c-num { width: 80px; }
.c-type { width: 120px; }
.c-date { width: 100px; }
.c-crc { width: 70px; }
th, td {
    height: 19px;
    padding: 0 6px;
    font-weight: normal;
    text-align: left;
    white-space: nowrap;
    overflow: hidden;
}
th {
    height: 25px;
    border-right: 1px solid #e5e5e5;
}
th.sorted {
    position: relative;
    padding-left: 7px;
}
.sort-mark {
    position: absolute;
    top: 0;
    left: 125px;
}
.num {
    text-align: right;
}
.file {
    display: flex;
    align-items: center;
    gap: 1px;
    padding-right: 0;
}
.file span {
    flex: 1;
    padding: 2px 2px 0;
    line-height: 17px;
}
.selected td:not(.file), .selected .file span {
    background: #0078d7;
    color: #fff;
}
.marked td {
    background: #f0f0f0;
}
.marquee {
    position: absolute;
    top: 57px;
    left: 137px;
    width: 136px;
    height: 91px;
    border: 1px dotted #fff;
    mix-blend-mode: difference;
}
.statusbar {
    display: flex;
    height: 24px;
    background: #f0f0f0;
}
.status-icons {
    display: flex;
    align-items: center;
    gap: 3px;
    width: 42px;
    padding-left: 4px;
    border-right: 1px solid #d4d4d4;
}
.status-text {
    flex: 1;
    padding: 6px 4px 0;
}
.status-text + .status-text {
    border-left: 1px solid #d4d4d4;
}
.grip {
    position: absolute;
    right: 1px;
    bottom: 1px;
}
.watermark {
    position: absolute;
    right: 48px;
    bottom: 46px;
    display: flex;
    align-items: center;
    gap: 3px;
    color: #fff;
    font-family: "Liberation Sans", Arial, sans-serif;
    font-size: 28px;
    line-height: 64px;
    text-shadow: 1px 1px 2px #bbb, -1px 0 2px #ccc;
}

/* taskbar */
.taskbar {
    position: relative;
    display: flex;
    height: 40px;
    background: linear-gradient(to right, #00161e, #010e18 60%, #020a18);
    color: #fff;
}
.start {
    width: 48px;
}
.search {
    display: flex;
    align-items: center;
    gap: 10px;
    width: 288px;
    padding: 0 10px;
    background: #f1f1f1;
    border: 1px solid #c4c4c4;
    color: #222;
}
.search input {
    flex: 1;
    min-width: 0;
    font-family: "Open Sans", sans-serif;
    font-size: 14px;
}
.search input::placeholder {
    color: #222;
    opacity: 1;
}
.app {
    width: 48px;
    margin-right: 1px;
    border-bottom: 3px solid transparent;
    padding-top: 3px;
}
.app.task-view {
    margin-right: 3px;
}
.app.open {
    background: linear-gradient(#76b9ed, #76b9ed) center bottom / 40px 3px no-repeat border-box;
}
.app.current {
    background: #33464e;
    border-bottom-color: #76b9ed;
}
.tray {
    display: flex;
    margin-left: auto;
    padding-right: 4px;
}
.tray button {
    width: 24px;
}
.tray .lang {
    width: 34px;
}
.tray .clock {
    flex-direction: column;
    width: 68px;
    line-height: 18px;
}
.tray .notify {
    width: 46px;
    padding-right: 10px;
    border-right: 1px solid #45505c;
    margin-left: 2px;
}
```
